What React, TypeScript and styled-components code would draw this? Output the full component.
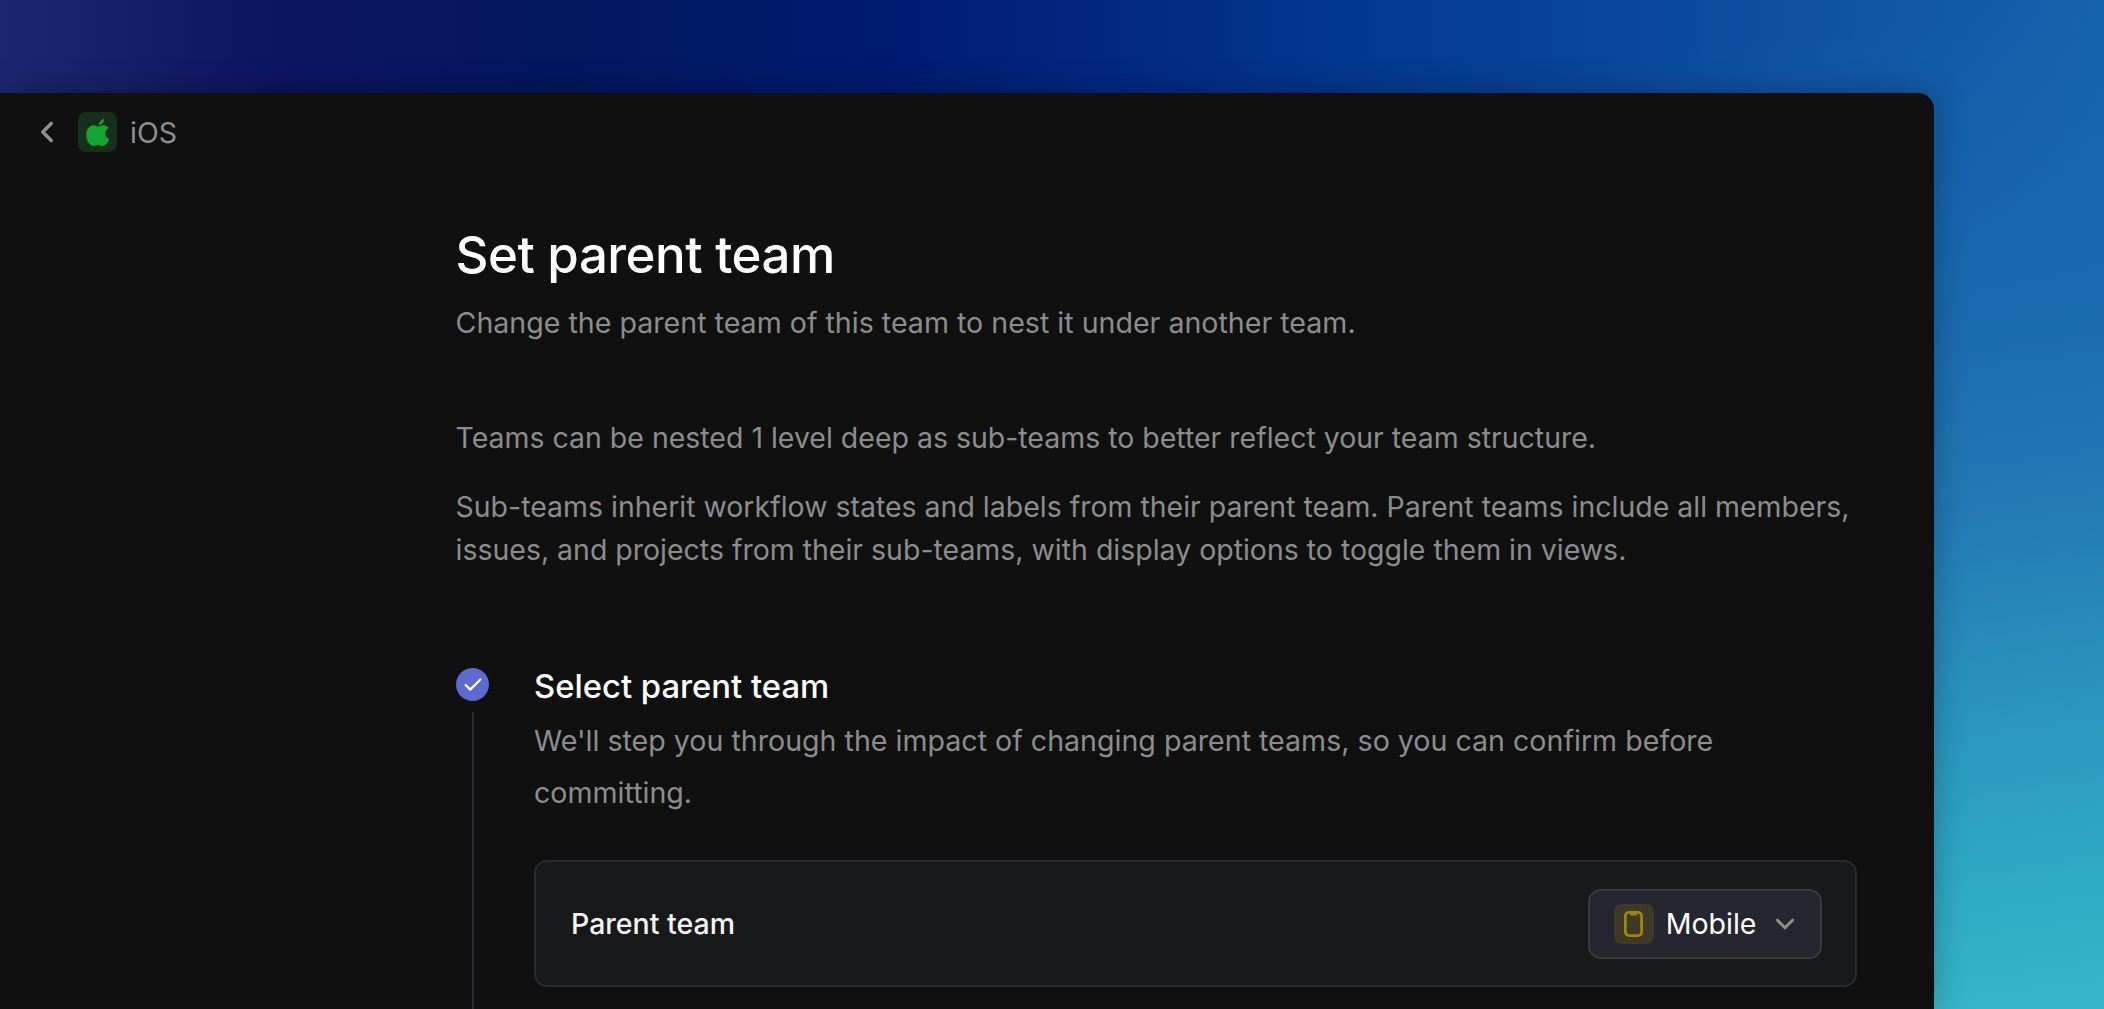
import React from "react"
import styled, { createGlobalStyle } from "styled-components"
import { ChevronDown, ChevronLeft, Check } from "lucide-react"

const GlobalStyle = createGlobalStyle`
  html, body {
    margin: 0;
    height: 100%;
    overflow: hidden;
    font-family: Inter, "Liberation Sans", sans-serif;
  }
`

const Backdrop = styled.div`
  width: 2104px;
  height: 1009px;
  padding-top: 93px;
  box-sizing: border-box;
  overflow: hidden;
  background:
    linear-gradient(172deg, rgba(18, 98, 173, 0) 22%, #1a69ae 44.700%, #2478b5 60%, #2a93bd 75%, #30aac4 90%, #38b6c8 100%),
    linear-gradient(90deg, #1b2870 0%, #0c1560 13%, #02175f 27%, #001a70 42%, #03358c 62%, #0a4a9c 80%, #1563ab 100%);
`

const Panel = styled.main`
  width: 1934px;
  height: 916px;
  box-sizing: border-box;
  background: #101011;
  border-radius: 0 16px 0 0;
  box-shadow: 0 0 32px rgba(0, 0, 0, 0.28);
  overflow: hidden;
`

const TopBar = styled.header`
  display: flex;
  align-items: center;
  height: 78px;
  padding: 0 0 0 30px;
  color: #8f8f91;
`

const TeamChip = styled.span`
  display: flex;
  align-items: center;
  justify-content: center;
  width: 39px;
  height: 40px;
  margin-left: 14px;
  border-radius: 8px;
  background: #17301d;
`

const TeamName = styled.span`
  margin-left: 13px;
  font-size: 28.500px;
  color: #8f8f91;
`

const Content = styled.div`
  width: 1401px;
  margin: 0 0 0 455.500px;
  padding-top: 54px;
`

const Title = styled.h1`
  margin: 0;
  font-size: 51px;
  line-height: 60px;
  font-weight: 450;
  letter-spacing: -0.500px;
  color: #fff;
`

const Subtitle = styled.p`
  margin: 16px 0 0;
  font-size: 28.600px;
  line-height: 43px;
  color: #8d8d8e;
`

const Intro = styled.div`
  margin-top: 72px;
  display: flex;
  flex-direction: column;
  gap: 26px;
`

const Body = styled.p`
  margin: 0;
  font-size: 28.480px;
  line-height: 43px;
  color: #8d8d8e;
`

const Steps = styled.section`
  display: flex;
  gap: 45px;
  margin: 95px 0 0 0.500px;
`

const Rail = styled.div`
  display: flex;
  flex-direction: column;
  align-items: center;
  width: 33px;
  flex: none;
  padding-top: 2px;
`

const StepDot = styled.span`
  display: flex;
  align-items: center;
  justify-content: center;
  width: 33px;
  height: 33px;
  border-radius: 50%;
  background: #5e69d1;
  color: #fff;
`

const RailLine = styled.span`
  width: 2px;
  height: 400px;
  margin-top: 11px;
  background: #2a2b30;
`

const StepBody = styled.div`
  flex: 1;
  min-width: 0;
`

const StepTitle = styled.h2`
  margin: 0;
  font-size: 32.800px;
  line-height: 40px;
  font-weight: 500;
  color: #fff;
`

const StepText = styled.p`
  margin: 9px 0 0;
  font-size: 28.600px;
  line-height: 52px;
  color: #8d8d8e;
`

const FieldCard = styled.div`
  display: flex;
  align-items: center;
  justify-content: space-between;
  height: 127px;
  margin-top: 41px;
  padding: 0 33px 0 35px;
  box-sizing: border-box;
  border: 2px solid #2a2b30;
  border-radius: 13px;
  background: #18191b;
`

const FieldLabel = styled.span`
  font-size: 28.500px;
  font-weight: 500;
  color: #f4f4f5;
`

const SelectButton = styled.button`
  display: flex;
  align-items: center;
  height: 70px;
  padding: 0 20px 0 24px;
  box-sizing: border-box;
  border: 2px solid #383a42;
  border-radius: 13px;
  background: #25262f;
  color: #fff;
  font: inherit;
`

const SelectChip = styled.span`
  display: flex;
  align-items: center;
  justify-content: center;
  width: 40px;
  height: 40px;
  border-radius: 8px;
  background: #3f3a26;
`

const SelectText = styled.span`
  margin: 0 13px 0 12px;
  font-size: 28.500px;
  font-weight: 400;
`

const AppleIcon = () => (
  <svg width="24" height="28" viewBox="0 0 24 28" fill="#13a52f">
    <path d="M12.400 7.200C13.300 3.900 15.300 1.600 18 .8c.3 2.900-1.800 6-5.600 6.400zM12 8.600c1.300 0 3-1.400 5.600-1.400 2 0 4 1 5.200 2.900-2.300 1.300-3.500 3-3.500 5.300 0 2.700 1.500 4.500 4 5.500-1.300 3.600-4 7.200-6.600 7.200-1.600 0-2.700-1.100-4.600-1.100s-3 1.100-4.600 1.100C4 28 .2 22.600.2 16.700c0-5.400 3.300-9.500 7.400-9.500 2 0 3.300 1.400 4.400 1.400z" />
  </svg>
)

const MobileIcon = () => (
  <svg width="19" height="26" viewBox="0 0 19 26" fill="none">
    <rect x="1.400" y="1.400" width="16.200" height="23.200" rx="3.500" stroke="#a0850e" strokeWidth="2.800" />
    <rect x="6" y="1" width="7" height="3.500" rx="1" fill="#a0850e" />
  </svg>
)

export default function App() {
  return (
    <>
      <GlobalStyle />
      <Backdrop>
        <Panel>
          <TopBar>
            <ChevronLeft size={34} strokeWidth={2.500} color="#8f8f91" />
            <TeamChip>
              <AppleIcon />
            </TeamChip>
            <TeamName>iOS</TeamName>
          </TopBar>
          <Content>
            <Title>Set parent team</Title>
            <Subtitle>Change the parent team of this team to nest it under another team.</Subtitle>
            <Intro>
              <Body>Teams can be nested 1 level deep as sub-teams to better reflect your team structure.</Body>
              <Body>
                Sub-teams inherit workflow states and labels from their parent team. Parent teams include all members, issues, and projects from their sub-teams, with display options to toggle them in views.
              </Body>
            </Intro>
            <Steps>
              <Rail>
                <StepDot>
                  <Check size={22} strokeWidth={2.500} />
                </StepDot>
                <RailLine />
              </Rail>
              <StepBody>
                <StepTitle>Select parent team</StepTitle>
                <StepText>We'll step you through the impact of changing parent teams, so you can confirm before committing.</StepText>
                <FieldCard>
                  <FieldLabel>Parent team</FieldLabel>
                  <SelectButton>
                    <SelectChip>
                      <MobileIcon />
                    </SelectChip>
                    <SelectText>Mobile</SelectText>
                    <ChevronDown size={30} strokeWidth={2.500} color="#8f8f91" />
                  </SelectButton>
                </FieldCard>
              </StepBody>
            </Steps>
          </Content>
        </Panel>
      </Backdrop>
    </>
  )
}
